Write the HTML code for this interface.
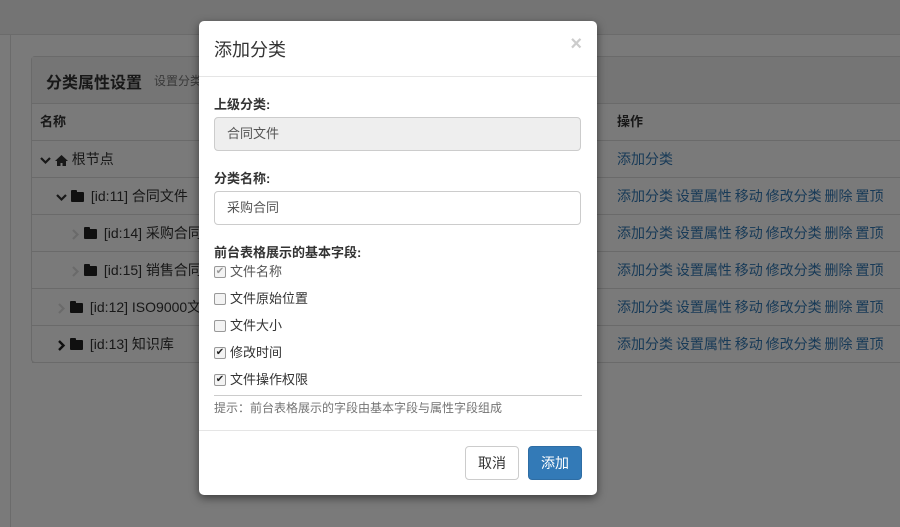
<!DOCTYPE html>
<html><head><meta charset="utf-8"><style>
*{box-sizing:border-box;margin:0;padding:0}
body{width:900px;height:527px;overflow:hidden;position:relative;background:#fff;font-family:"Liberation Sans","Noto Sans CJK SC",sans-serif;font-size:13px;color:#333}
.abs{position:absolute}
.top{left:0;top:0;width:900px;height:35px;background:#f3f3f3;border-bottom:1px solid #e0e0e0}
.side{left:10px;top:35px;width:1px;height:492px;background:#e0e0e0}
.panel{left:31px;top:56px;width:880px;height:307px;border:1px solid #ddd;border-radius:4px}
.ph{left:0;top:0;width:100%;height:47px;background:#f5f5f5;border-bottom:1px solid #ddd}
.row{left:0;width:100%;height:37px;border-bottom:1px solid #ddd;line-height:36px;font-size:14px}
.lnk{color:#337ab7;position:absolute;left:585px;word-spacing:-1px}
.ov{left:0;top:0;width:900px;height:527px;background:rgba(0,0,0,.52)}
.modal{left:199px;top:21px;width:398px;height:474px;background:#fff;border-radius:5px;box-shadow:0 3px 9px rgba(0,0,0,.5)}
.lab{font-weight:bold;font-size:13px;position:absolute;left:15px}
.inp{position:absolute;left:15px;width:367px;height:34px;border:1px solid #ccc;border-radius:4px;padding-left:12px;line-height:32px;font-size:13px;color:#555}
.cb{position:absolute;left:15px;font-size:13px;color:#333;line-height:16px}
.cb i{display:inline-block;width:12px;height:12px;border:1px solid #999;border-radius:2px;background:#f3f3f3;vertical-align:middle;margin-right:4px;font-style:normal;font-size:10px;line-height:10px;text-align:center;color:#222;position:relative;top:-1px}
.fold{display:inline-block;width:13px;height:10px;background:#222;border-radius:1px;vertical-align:-1px;position:relative;margin-right:7px}
.fold:before{content:"";position:absolute;left:0;top:-2px;width:6px;height:3px;background:#222;border-radius:1px 1px 0 0}
svg{vertical-align:middle}
</style></head><body>
<div class="abs top"></div>
<div class="abs side"></div>
<div class="abs panel">
 <div class="abs ph"><span class="abs" style="left:14px;top:12px;font-size:16px;font-weight:bold">分类属性设置</span><span class="abs" style="left:122px;top:15px;font-size:12px;color:#777">设置分类</span></div>
 <div class="abs row" style="top:47px;font-weight:bold;font-size:13px"><span class="abs" style="left:8px">名称</span><span class="abs" style="left:585px">操作</span></div>
 <div class="abs row" style="top:84px"><span class="abs" style="left:8px"><svg width="11" height="10"><path d="M1 3l4.5 4.5L10 3" stroke="#333" stroke-width="2.2" fill="none"/></svg> <svg width="13" height="11"><path d="M6.5 0L0 6h2v5h3.5V8h2v3H11V6h2z" fill="#333"/></svg> 根节点</span><span class="lnk">添加分类</span></div>
 <div class="abs row" style="top:121px"><span class="abs" style="left:24px"><svg width="11" height="10"><path d="M1 3l4.5 4.5L10 3" stroke="#333" stroke-width="2.2" fill="none"/></svg> <span class="fold"></span>[id:11] 合同文件</span><span class="lnk">添加分类 设置属性 移动 修改分类 删除 置顶</span></div>
 <div class="abs row" style="top:158px"><span class="abs" style="left:38px"><svg width="10" height="11"><path d="M3 1l4.5 4.5L3 10" stroke="#ddd" stroke-width="2.2" fill="none"/></svg> <span class="fold"></span>[id:14] 采购合同</span><span class="lnk">添加分类 设置属性 移动 修改分类 删除 置顶</span></div>
 <div class="abs row" style="top:195px"><span class="abs" style="left:38px"><svg width="10" height="11"><path d="M3 1l4.5 4.5L3 10" stroke="#ddd" stroke-width="2.2" fill="none"/></svg> <span class="fold"></span>[id:15] 销售合同</span><span class="lnk">添加分类 设置属性 移动 修改分类 删除 置顶</span></div>
 <div class="abs row" style="top:232px"><span class="abs" style="left:24px"><svg width="10" height="11"><path d="M3 1l4.5 4.5L3 10" stroke="#ddd" stroke-width="2.2" fill="none"/></svg> <span class="fold"></span>[id:12] ISO9000文件</span><span class="lnk">添加分类 设置属性 移动 修改分类 删除 置顶</span></div>
 <div class="abs row" style="top:269px"><span class="abs" style="left:24px"><svg width="10" height="11"><path d="M3 1l4.5 4.5L3 10" stroke="#222" stroke-width="2.4" fill="none"/></svg> <span class="fold"></span>[id:13] 知识库</span><span class="lnk">添加分类 设置属性 移动 修改分类 删除 置顶</span></div>
</div>
<div class="abs ov"></div>
<div class="abs modal">
 <div class="abs" style="left:15px;top:15px;font-size:18px;color:#333">添加分类</div>
 <div class="abs" style="right:15px;top:12px;font-size:20px;font-weight:bold;color:#ccc">×</div>
 <div class="abs" style="left:0;top:55px;width:100%;height:1px;background:#e5e5e5"></div>
 <div class="lab" style="top:73px">上级分类:</div>
 <div class="inp" style="top:96px;background:#eee">合同文件</div>
 <div class="lab" style="top:147px">分类名称:</div>
 <div class="inp" style="top:170px;background:#fff">采购合同</div>
 <div class="lab" style="top:221px">前台表格展示的基本字段:</div>
 <div class="cb" style="top:243px;color:#555"><i style="color:#999">✔</i>文件名称</div>
 <div class="cb" style="top:270px"><i></i>文件原始位置</div>
 <div class="cb" style="top:297px"><i></i>文件大小</div>
 <div class="cb" style="top:324px"><i>✔</i>修改时间</div>
 <div class="cb" style="top:351px"><i>✔</i>文件操作权限</div>
 <div class="abs" style="left:15px;top:374px;width:368px;height:1px;background:#ccc"></div>
 <div class="abs" style="left:15px;top:378px;font-size:12px;color:#737373">提示：前台表格展示的字段由基本字段与属性字段组成</div>
 <div class="abs" style="left:0;top:409px;width:100%;height:1px;background:#e5e5e5"></div>
 <div class="abs" style="left:266px;top:425px;width:54px;height:34px;border:1px solid #ccc;border-radius:4px;text-align:center;line-height:32px;font-size:14px">取消</div>
 <div class="abs" style="left:329px;top:425px;width:54px;height:34px;background:#337ab7;border:1px solid #2e6da4;border-radius:4px;text-align:center;line-height:32px;font-size:14px;color:#fff">添加</div>
</div>
</body></html>
